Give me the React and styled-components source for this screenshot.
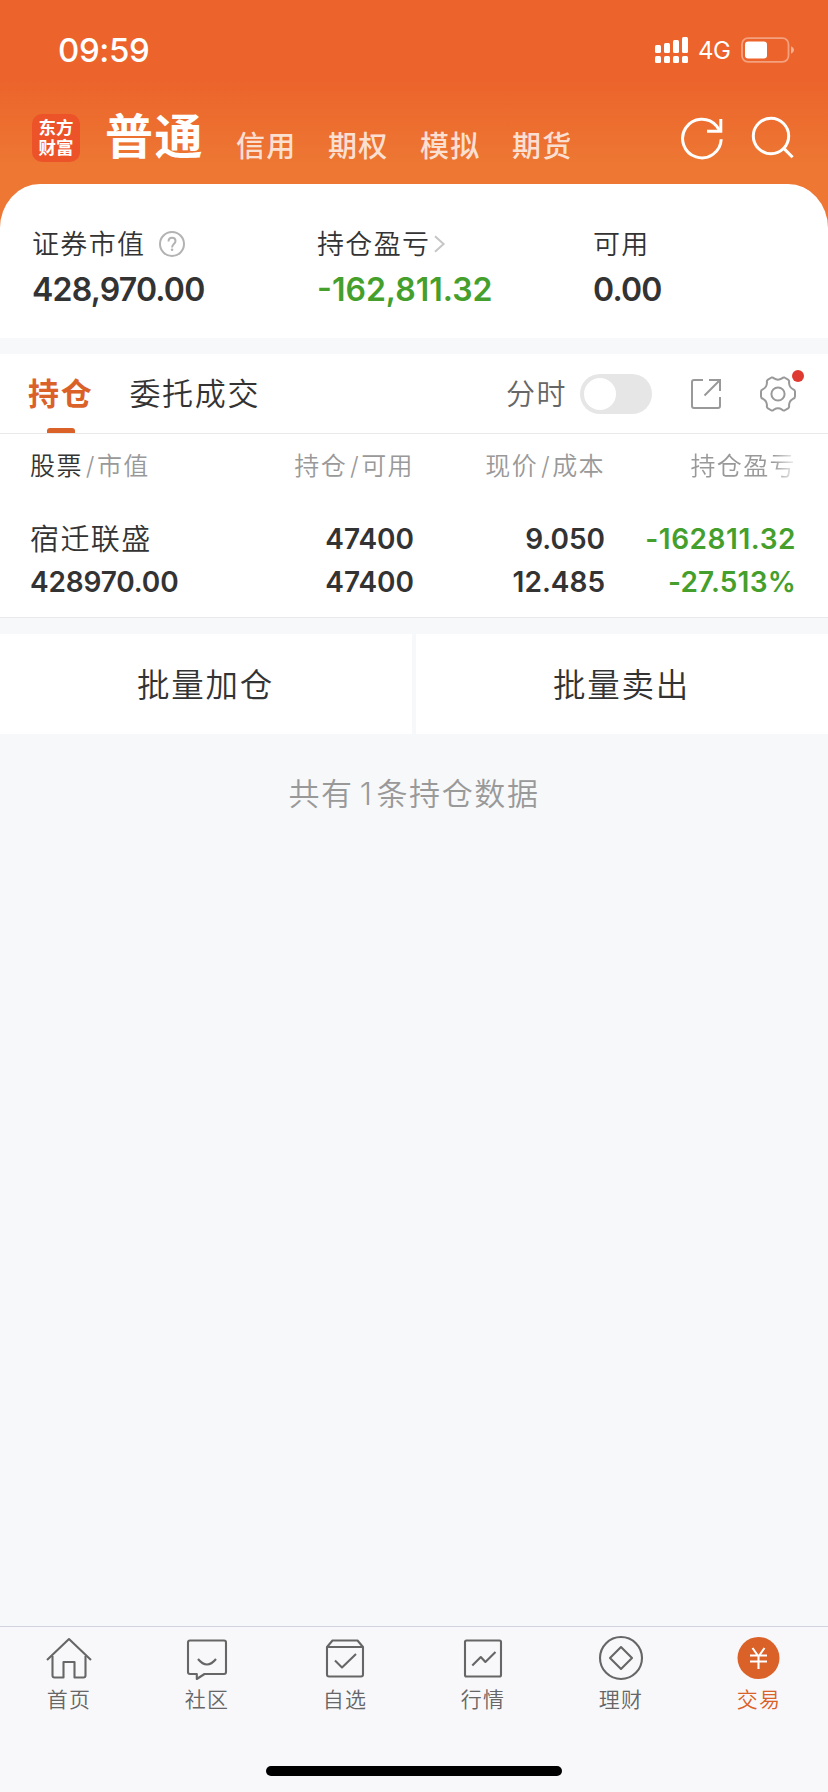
import React from 'react';
import styled, { createGlobalStyle } from 'styled-components';

const GlobalStyle = createGlobalStyle`
  * { box-sizing: border-box; }
  body {
    margin: 0;
    background: #f7f8fa;
    font-family: Inter, "Noto Sans CJK SC", sans-serif;
    font-weight: 350;
    color: #333;
    -webkit-font-smoothing: antialiased;
  }
  svg { display: block; flex: none; }
`;

const Screen = styled.div`
  width: 828px;
  height: 1792px;
  display: flex;
  flex-direction: column;
  overflow: hidden;
  background: #f7f8fa;
`;

const Hero = styled.header`
  height: 338px;
  display: flex;
  flex-direction: column;
  background: linear-gradient(#ec632b 0, #ec632b 75px, #ed7733 165px, #ed7733 100%);
`;

const StatusBar = styled.div`
  height: 99px;
  display: flex;
  align-items: center;
  padding: 0 34px 0 58px;
  color: #fff;
`;

const Clock = styled.span`
  flex: 1;
  font-size: 33px;
  font-weight: 500;
  line-height: 40px;
  letter-spacing: -0.4px;
`;

const Network = styled.span`
  margin: 2px 10px 0 10px;
  width: 33px;
  font-size: 24px;
  font-weight: 400;
  letter-spacing: -0.4px;
  line-height: 30px;
`;

const NavBar = styled.nav`
  height: 85px;
  display: flex;
  align-items: flex-start;
  padding: 15px 34px 0 32px;
`;

const Logo = styled.div`
  width: 48px;
  height: 48px;
  padding-top: 4px;
  border-radius: 10px;
  background: #ec5329;
  color: #fff;
  font-size: 17.5px;
  font-weight: 700;
  line-height: 20px;
  text-align: center;
`;

const ActiveAccount = styled.span`
  margin: -7px 0 0 25px;
  width: 131px;
  color: #fff;
  font-size: 48px;
  font-weight: 700;
  line-height: 60px;
  letter-spacing: 1.6px;
`;

const Account = styled.span`
  width: 92px;
  padding-top: 13px;
  color: rgba(255, 255, 255, 0.8);
  font-size: 29px;
  font-weight: 500;
  line-height: 40px;
  letter-spacing: 1.3px;
`;

const NavIcons = styled.div`
  display: flex;
  margin-left: auto;
  gap: 26px;
`;

const Summary = styled.section`
  height: 154px;
  display: flex;
  padding: 41px 32px 0;
  border-radius: 40px 40px 0 0 / 44px 44px 0 0;
  background: #fff;
`;

const SummaryItem = styled.div`
  width: ${(p) => p.$width}px;
`;

const SummaryLabel = styled.div`
  height: 40px;
  display: flex;
  align-items: center;
  font-size: 27px;
  line-height: 40px;
  letter-spacing: 1.35px;
  svg { margin: 0 0 2px ${(p) => p.$iconGap || 0}px; }
`;

const SummaryValue = styled.div`
  margin-top: 5px;
  font-size: 32px;
  font-weight: 600;
  line-height: 40px;
  letter-spacing: ${(p) => p.$tracking || '-0.8px'};
  color: ${(p) => (p.$loss ? '#459f2c' : '#333')};
`;

const Tabs = styled.section`
  height: 80px;
  margin-top: 16px;
  display: flex;
  padding: 0 32px 0 28px;
  border-bottom: 1px solid #e9e9e9;
  background: #fff;
`;

const Tab = styled.div`
  display: flex;
  flex-direction: column;
  align-items: center;
  justify-content: space-between;
  padding-top: 20px;
  margin-right: 36px;
  font-size: 31px;
  line-height: 40px;
  letter-spacing: 1.7px;
  font-weight: ${(p) => (p.$active ? 700 : 'inherit')};
  color: ${(p) => (p.$active ? '#da6128' : '#333')};
`;

const TabMark = styled.i`
  width: 28px;
  height: 5px;
  border-radius: 3px 3px 0 0;
  background: #da6128;
`;

const TabTools = styled.div`
  margin-left: auto;
  display: flex;
  align-items: center;
`;

const ToolLabel = styled.span`
  padding-top: 3px;
  font-size: 29px;
  line-height: 40px;
  letter-spacing: 1.5px;
  color: #666;
`;

const Toggle = styled.span`
  width: 72px;
  height: 40px;
  margin: 0 39px 0 13px;
  padding: 4px;
  border-radius: 20px;
  background: #e6e6e6;
  &::before {
    content: '';
    display: block;
    width: 32px;
    height: 32px;
    border-radius: 50%;
    background: #fff;
  }
`;

const GearBox = styled.span`
  position: relative;
  margin-left: 39px;
`;

const RedDot = styled.i`
  position: absolute;
  top: -6px;
  right: -8px;
  width: 12px;
  height: 12px;
  border-radius: 50%;
  background: #df3a32;
`;

const Holdings = styled.section`
  height: 184px;
  padding: 12px 32px 0 30px;
  border-bottom: 1px solid #e9e9eb;
  background: #fff;
`;

const Row = styled.div`
  display: grid;
  grid-template-columns: 1fr 191px 191px 191px;
  text-align: right;
  > :first-child { text-align: left; }
`;

const HeadRow = styled(Row)`
  height: 40px;
  margin-bottom: 32px;
  font-size: 25px;
  line-height: 40px;
  letter-spacing: 1.4px;
  color: #999;
`;

const Strong = styled.span`
  color: #333;
`;

const Slash = styled.span`
  padding: 0 1px 0 3px;
`;

const FadingHead = styled.span`
  -webkit-mask-image: linear-gradient(to right, #000 168px, transparent 194px);
  mask-image: linear-gradient(to right, #000 168px, transparent 194px);
`;

const DataRow = styled(Row)`
  height: 43px;
  font-size: 28px;
  line-height: 43px;
`;

const StockName = styled.span`
  font-size: 29px;
  letter-spacing: 1.4px;
`;

const Figure = styled.span`
  font-weight: 600;
  letter-spacing: ${(p) => p.$tracking || '0'};
  color: ${(p) => (p.$loss ? '#459f2c' : '#333')};
`;

const Actions = styled.section`
  display: grid;
  grid-template-columns: 1fr 1fr;
  gap: 4px;
  margin-top: 16px;
`;

const ActionButton = styled.button`
  height: 100px;
  padding: 3px 1px 0 0;
  border: 0;
  background: #fff;
  color: #333;
  font-family: inherit;
  font-weight: inherit;
  font-size: 32.5px;
  line-height: 40px;
  letter-spacing: 1.8px;
`;

const Footnote = styled.p`
  flex: 1;
  margin: 0;
  padding-top: 40px;
  text-align: center;
  font-size: 31px;
  line-height: 40px;
  letter-spacing: 1.6px;
  color: #999;
`;

const Count = styled.span`
  margin: 0 3px 0 6px;
`;

const TabBar = styled.footer`
  height: 166px;
  display: flex;
  flex-direction: column;
  align-items: center;
  justify-content: space-between;
  padding-bottom: 16px;
  border-top: 1px solid #d3d3dd;
  background: #f8f8fb;
`;

const TabBarItems = styled.div`
  width: 828px;
  display: grid;
  grid-template-columns: repeat(6, 138px);
`;

const TabBarItem = styled.div`
  display: flex;
  flex-direction: column;
  align-items: center;
  padding-top: 8px;
  font-size: 21px;
  line-height: 30px;
  letter-spacing: 1.2px;
  color: ${(p) => (p.$active ? '#da6128' : '#666')};
  svg { margin-bottom: 4px; }
`;

const HomeIndicator = styled.i`
  width: 296px;
  height: 10px;
  border-radius: 5px;
  background: #000;
`;

const Signal = () => (
  <svg width="33" height="26" fill="#fff">
    {[0, 9, 18, 27].map((x, i) => (
      <React.Fragment key={x}>
        <rect x={x} y={[8, 6, 3, 0][i]} width="6" height={[8, 10, 13, 16][i]} rx="1.5" />
        <rect x={x} y="19" width="6" height="7" rx="1.5" />
      </React.Fragment>
    ))}
  </svg>
);

const Battery = () => (
  <svg width="53" height="26" fill="none">
    <rect x="1" y="1.2" width="46.5" height="23.6" rx="6" stroke="#fff" strokeOpacity=".4" strokeWidth="1.8" />
    <rect x="4" y="4.5" width="22" height="17" rx="3.2" fill="#fff" />
    <path d="M50 9.2q3 1.2 3 3.8t-3 3.8z" fill="#fff" fillOpacity=".5" />
  </svg>
);

const RefreshIcon = () => (
  <svg width="44" height="48" fill="none" stroke="#fff" strokeWidth="3">
    <path d="M41.2 25.3A19.3 19.3 0 1 1 36.5 11.9L39.5 16.5" />
    <path d="M40.8 5v12.2H27" />
  </svg>
);

const SearchIcon = () => (
  <svg width="44" height="48" fill="none" stroke="#fff" strokeWidth="3">
    <circle cx="21" cy="22" r="17.7" />
    <path d="M34 34.6l8.6 8.6" />
  </svg>
);

const HelpIcon = () => (
  <svg width="26" height="26" fill="none" stroke="#b3b3b3" strokeWidth="2">
    <circle cx="13" cy="13" r="12" />
    <path d="M9.5 10.4c0-2.2 1.4-3.7 3.5-3.7s3.5 1.4 3.5 3.4c0 3-3.4 3-3.4 6.3" />
    <circle cx="13.1" cy="18.8" r="1.3" fill="#b3b3b3" stroke="none" />
  </svg>
);

const ChevronIcon = () => (
  <svg width="12" height="18" fill="none" stroke="#c6c6c6" strokeWidth="2">
    <path d="M1 1.2l8.6 7.8L1 16.8" />
  </svg>
);

const ExportIcon = () => (
  <svg width="30" height="30" fill="none" stroke="#999" strokeWidth="2">
    <path d="M12 1H3Q1 1 1 3V27Q1 29 3 29H27Q29 29 29 27V18" />
    <path d="M18 1H29V12M29 1L13.5 16.5" />
  </svg>
);

const GearIcon = () => (
  <svg width="36" height="36" fill="none" stroke="#999" strokeWidth="2" strokeLinejoin="round">
    <path d="M11.5 1.5Q13 1.2 14 2.4Q18 5 22 2.400Q23 1.200 24.500 1.500L28 3.600Q29.600 4.600 29 6.500Q29.300 11.500 33 13.200Q35 13.700 35 15.500V20.500Q35 22.300 33 22.800Q29.300 24.500 29 29.500Q29.600 31.400 28 32.400L24.500 34.500Q23 34.800 22 33.600Q18 31 14 33.600Q13 34.800 11.500 34.500L8 32.400Q6.400 31.400 7 29.500Q6.700 24.500 3 22.800Q1 22.300 1 20.500V15.500Q1 13.700 3 13.200Q6.700 11.500 7 6.500Q6.400 4.600 8 3.600Z" />
    <circle cx="18" cy="18" r="6.600" />
  </svg>
);

const tabIcons = {
  首页: (
    <>
      <path d="M1 25L23 4l22 21" />
      <path d="M6.500 21V40.500Q6.500 42.500 8.500 42.500H17.500V27H28.500V42.500H37.500Q39.500 42.500 39.500 40.500V21" />
    </>
  ),
  社区: (
    <>
      <path d="M6 5.500H40Q42 5.500 42 7.500V37Q42 39 40 39H20.500L12.800 44V39H6Q4 39 4 37V7.500Q4 5.500 6 5.500Z" />
      <path d="M14 24q9 11 18 0" />
    </>
  ),
  自选: (
    <>
      <path d="M5 12L10.500 5.500H35.500L41 12" />
      <path d="M5 12H41V39.500Q41 41.500 39 41.500H7Q5 41.500 5 39.500Z" />
      <path d="M13 25.500l7 7L34 19" />
    </>
  ),
  行情: (
    <>
      <rect x="5" y="5.500" width="36" height="36" rx="1.500" />
      <path d="M12.300 30.500l8.500-8.500 4.600 5L35.500 17" />
    </>
  ),
  理财: (
    <>
      <circle cx="23" cy="23" r="21" />
      <path d="M23 12l11 11-11 11-11-11z" />
    </>
  ),
  交易: (
    <>
      <circle cx="22.5" cy="23" r="21" fill="#da6128" stroke="none" />
      <path d="M16.500 13l6 8.500 6-8.500M22.500 21.500V34M14 20.500H31M14 26.500H31" stroke="#fff" />
    </>
  ),
};

export default function App() {
  return (
    <Screen>
      <GlobalStyle />
      <Hero>
        <StatusBar>
          <Clock>09:59</Clock>
          <Signal />
          <Network>4G</Network>
          <Battery />
        </StatusBar>
        <NavBar>
          <Logo>东方<br />财富</Logo>
          <ActiveAccount>普通</ActiveAccount>
          {['信用', '期权', '模拟', '期货'].map((name) => (
            <Account key={name}>{name}</Account>
          ))}
          <NavIcons>
            <RefreshIcon />
            <SearchIcon />
          </NavIcons>
        </NavBar>
        <Summary>
          <SummaryItem $width={285}>
            <SummaryLabel $iconGap={14}>证券市值<HelpIcon /></SummaryLabel>
            <SummaryValue>428,970.00</SummaryValue>
          </SummaryItem>
          <SummaryItem $width={276}>
            <SummaryLabel $iconGap={4}>持仓盈亏<ChevronIcon /></SummaryLabel>
            <SummaryValue $loss $tracking="0">-162,811.32</SummaryValue>
          </SummaryItem>
          <SummaryItem $width={150}>
            <SummaryLabel>可用</SummaryLabel>
            <SummaryValue>0.00</SummaryValue>
          </SummaryItem>
        </Summary>
      </Hero>
      <Tabs>
        <Tab $active>持仓<TabMark /></Tab>
        <Tab>委托成交</Tab>
        <TabTools>
          <ToolLabel>分时</ToolLabel>
          <Toggle />
          <ExportIcon />
          <GearBox><GearIcon /><RedDot /></GearBox>
        </TabTools>
      </Tabs>
      <Holdings>
        <HeadRow>
          <span><Strong>股票</Strong><Slash>/</Slash>市值</span>
          <span>持仓<Slash>/</Slash>可用</span>
          <span>现价<Slash>/</Slash>成本</span>
          <FadingHead>持仓盈亏</FadingHead>
        </HeadRow>
        <DataRow>
          <StockName>宿迁联盛</StockName>
          <Figure>47400</Figure>
          <Figure>9.050</Figure>
          <Figure $loss $tracking="0.55px">-162811.32</Figure>
        </DataRow>
        <DataRow>
          <Figure $tracking="-0.15px">428970.00</Figure>
          <Figure>47400</Figure>
          <Figure>12.485</Figure>
          <Figure $loss $tracking="0.2px">-27.513%</Figure>
        </DataRow>
      </Holdings>
      <Actions>
        <ActionButton>批量加仓</ActionButton>
        <ActionButton>批量卖出</ActionButton>
      </Actions>
      <Footnote>共有<Count>1</Count>条持仓数据</Footnote>
      <TabBar>
        <TabBarItems>
          {Object.entries(tabIcons).map(([name, drawing]) => (
            <TabBarItem key={name} $active={name === '交易'}>
              <svg width="46" height="46" fill="none" stroke="#666" strokeWidth="2.1" strokeLinejoin="round">
                {drawing}
              </svg>
              {name}
            </TabBarItem>
          ))}
        </TabBarItems>
        <HomeIndicator />
      </TabBar>
    </Screen>
  );
}
